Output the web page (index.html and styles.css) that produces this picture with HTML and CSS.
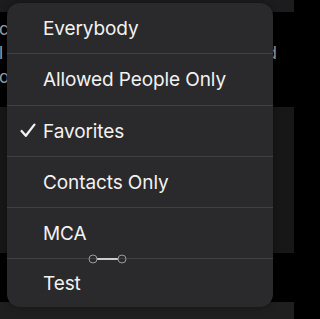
FILE: index.html
```html
<!DOCTYPE html>
<html>
<head>
<meta charset="utf-8">
<link rel="stylesheet" href="styles.css">
</head>
<body>
<div class="screen">
  <div class="band band-top"></div>
  <div class="band band-black">
    <div class="bg-left">
      <span>c</span>
      <span>l</span>
      <span>o</span>
    </div>
    <div class="bg-right"><span>d</span></div>
  </div>
  <div class="band band-mid"></div>
  <div class="band band-black2"></div>
  <div class="band band-bottom"></div>

  <div class="menu">
    <div class="item"><span class="check"></span><span class="label">Everybody</span></div>
    <div class="item"><span class="check"></span><span class="label">Allowed People Only</span></div>
    <div class="item"><span class="check"><svg width="16" height="15" viewBox="0 0 16 15"><path d="M1.6 8 L5.8 12.8 L14.4 1.6" fill="none" stroke="#f2f2f2" stroke-width="2.3" stroke-linecap="round" stroke-linejoin="round"/></svg></span><span class="label">Favorites</span></div>
    <div class="item"><span class="check"></span><span class="label">Contacts Only</span></div>
    <div class="item"><span class="check"></span><span class="label">MCA</span></div>
    <div class="item last"><span class="check"></span><span class="label">Test</span></div>
  </div>

  <svg class="handle" width="40" height="12" viewBox="0 0 40 12">
    <line x1="9" y1="6" x2="30" y2="6" stroke="#ffffff" stroke-width="1.5"/>
    <circle cx="5" cy="6" r="4" fill="none" stroke="#9a9a9a" stroke-width="1"/>
    <circle cx="34" cy="6" r="4" fill="none" stroke="#9a9a9a" stroke-width="1"/>
  </svg>
</div>
</body>
</html>
```

FILE: styles.css
```css
html, body {
  margin: 0;
  padding: 0;
  background: #000;
}
.screen {
  position: relative;
  width: 294px;
  height: 319px;
  overflow: hidden;
  display: flex;
  flex-direction: column;
  font-family: "Inter", "Liberation Sans", sans-serif;
}
.band { flex: none; }
.band-top { height: 12px; background: #1c1c1e; }
.band-black {
  height: 95px;
  background: #000;
  display: flex;
  justify-content: space-between;
  color: #a0a0a4;
  font-size: 17px;
}
.bg-left {
  display: flex;
  flex-direction: column;
  padding-top: 6px;
  gap: 2px;
  margin-left: -1px;
}
.bg-left span { line-height: 22px; }
.bg-right {
  padding-top: 31px;
  margin-right: 17px;
}
.band-mid { height: 146px; background: #171717; }
.band-black2 { height: 49px; background: #000; }
.band-bottom { flex: 1; background: #1f1f1f; }

.menu {
  position: absolute;
  left: 7px;
  top: 3px;
  width: 266px;
  height: 304px;
  background: #2a292b;
  border-radius: 13px;
  box-shadow: 0 0 6px rgba(0,0,0,0.35);
  display: flex;
  flex-direction: column;
  overflow: hidden;
}
.item {
  height: 50.3px;
  border-bottom: 1px solid #403f41;
  display: flex;
  align-items: center;
  color: #f2f2f2;
  font-size: 19px;
  flex: none;
}
.item.last { border-bottom: none; flex: 1; }
.check {
  width: 36px;
  display: flex;
  justify-content: flex-end;
  box-sizing: border-box;
  padding-left: 13px;
}
.check svg { display: block; margin-right: 7px; }
.label { letter-spacing: -0.1px; padding-top: 1px; }

.handle {
  position: absolute;
  left: 88px;
  top: 253px;
}
```
